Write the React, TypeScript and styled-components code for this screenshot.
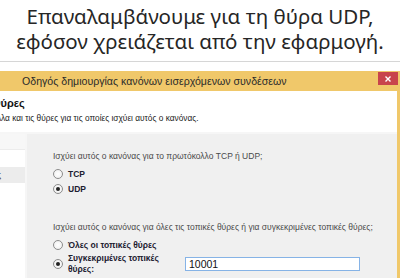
import React from 'react';
import styled, { createGlobalStyle } from 'styled-components';

const GlobalStyle = createGlobalStyle`
  html, body {
    margin: 0;
    padding: 0;
    background: #ffffff;
    overflow: hidden;
  }
`;

const Page = styled.div`
  width: 400px;
  height: 278px;
  overflow: hidden;
  display: flex;
  flex-direction: column;
`;

const Slide = styled.div`
  height: 61px;
  padding-top: 4px;
  box-sizing: border-box;
  text-align: center;
  font-family: 'Noto Sans', 'Open Sans', sans-serif;
  font-size: 20.5px;
  line-height: 25px;
  color: #262626;
  white-space: nowrap;
`;

const Shot = styled.div`
  flex: 1;
  border-top: 1px solid #d6d6d6;
  padding-top: 9px;
  overflow: hidden;
  font-family: 'Liberation Sans', Arial, sans-serif;
`;

const Window = styled.div`
  margin-left: -130px;
  width: calc(100% + 130px);
  box-sizing: border-box;
  border-right: 3px solid #f0c86a;
  background: #f0c86a;
`;

const TitleBar = styled.div`
  position: relative;
  height: 20px;
  display: flex;
  align-items: center;
  padding-left: 152px;
  font-size: 10.6px;
  color: #2b2b2b;
  white-space: nowrap;
`;

const CloseButton = styled.div`
  position: absolute;
  top: 1px;
  right: -1px;
  width: 20px;
  height: 13px;
  background: #c8444c;
  display: flex;
  align-items: center;
  justify-content: center;
`;

const Header = styled.div`
  background: #ffffff;
  height: 41px;
  border-bottom: 2px solid #f6f6f6;
  display: flex;
  flex-direction: column;
`;

const HeaderTitle = styled.div`
  padding: 6px 0 0 122px;
  font-size: 11px;
  font-weight: bold;
  color: #111;
`;

const HeaderText = styled.div`
  padding: 4px 0 0 43px;
  font-size: 8.3px;
  color: #222;
  white-space: nowrap;
`;

const Body = styled.div`
  display: flex;
  background: #ffffff;
  height: 160px;
`;

const Steps = styled.div`
  width: 155px;
  border-right: 2px solid #f6f6f6;
  background: #ffffff;
  display: flex;
  flex-direction: column;
`;

const StepsHead = styled.div`
  height: 15px;
  background: #f7f7f7;
  border-bottom: 1px solid #ececec;
`;

const Step = styled.div<{ active?: boolean }>`
  height: 16px;
  margin-top: ${(p) => (p.active ? '1px' : '0')};
  display: flex;
  align-items: center;
  padding-left: 46px;
  font-size: 8.5px;
  color: #222;
  background: ${(p) => (p.active ? '#ececec' : '#ffffff')};
  white-space: nowrap;
`;

const Main = styled.div`
  flex: 1;
  background: #f0f0f0;
  padding: 17px 0 0 26px;
  font-size: 8.5px;
  color: #4a4a4a;
`;

const Question = styled.div<{ spaced?: boolean }>`
  height: 10px;
  line-height: 10px;
  margin-top: ${(p) => (p.spaced ? '26px' : '0')};
  white-space: nowrap;
`;

const Options = styled.div`
  display: flex;
  flex-direction: column;
  padding-top: 5px;
`;

const Option = styled.label`
  display: flex;
  align-items: center;
  gap: 5px;
  height: 15px;
  font-weight: bold;
  color: #1d2030;
  white-space: nowrap;
`;

const Radio = styled.span<{ checked?: boolean }>`
  width: 8px;
  height: 8px;
  border-radius: 50%;
  border: 1px solid #8c8c8c;
  background: radial-gradient(circle, #ffffff 0%, #ececec 100%);
  display: flex;
  align-items: center;
  justify-content: center;
  flex-shrink: 0;

  &::after {
    content: '';
    width: 4px;
    height: 4px;
    border-radius: 50%;
    background: ${(p) => (p.checked ? '#222' : 'transparent')};
  }
`;

const PortRow = styled.div`
  display: flex;
  align-items: center;
  gap: 5px;
  margin-top: 1px;
  font-weight: bold;
  color: #1d2030;
`;

const PortLabel = styled.div`
  width: 112px;
  line-height: 10.5px;
`;

const PortInput = styled.input`
  width: 175px;
  height: 14px;
  box-sizing: border-box;
  border: 1px solid #86b3e6;
  padding: 0 3px;
  font-family: 'Liberation Sans', Arial, sans-serif;
  font-size: 10.5px;
  color: #111;
  outline: none;
  background: #fff;
`;

const App = () => (
  <Page>
    <GlobalStyle />
    <Slide>
      Επαναλαμβάνουμε για τη θύρα UDP,
      <br />
      εφόσον χρειάζεται από την εφαρμογή.
    </Slide>
    <Shot>
      <Window>
        <TitleBar>
          Οδηγός δημιουργίας κανόνων εισερχόμενων συνδέσεων
          <CloseButton>
            <svg width="6" height="6" viewBox="0 0 6 6">
              <path d="M0.5 0.5 L5.5 5.5 M5.5 0.5 L0.5 5.5" stroke="#fff" strokeWidth="1.4" />
            </svg>
          </CloseButton>
        </TitleBar>
        <Header>
          <HeaderTitle>Θύρες</HeaderTitle>
          <HeaderText>Καθορίστε τα πρωτόκολλα και τις θύρες για τις οποίες ισχύει αυτός ο κανόνας.</HeaderText>
        </Header>
        <Body>
          <Steps>
            <StepsHead />
            <Step>Τύπος κανόνα</Step>
            <Step active>Πρωτόκολλο και θύρες</Step>
            <Step>Ενέργεια</Step>
            <Step>Προφίλ</Step>
            <Step>Όνομα</Step>
          </Steps>
          <Main>
            <Question>Ισχύει αυτός ο κανόνας για το πρωτόκολλο TCP ή UDP;</Question>
            <Options>
              <Option>
                <Radio /> TCP
              </Option>
              <Option>
                <Radio checked /> UDP
              </Option>
            </Options>
            <Question spaced>
              Ισχύει αυτός ο κανόνας για όλες τις τοπικές θύρες ή για συγκεκριμένες τοπικές θύρες;
            </Question>
            <Options>
              <Option>
                <Radio /> Όλες οι τοπικές θύρες
              </Option>
              <PortRow>
                <Radio checked />
                <PortLabel>Συγκεκριμένες τοπικές θύρες:</PortLabel>
                <PortInput defaultValue="10001" />
              </PortRow>
            </Options>
          </Main>
        </Body>
      </Window>
    </Shot>
  </Page>
);

export default App;
